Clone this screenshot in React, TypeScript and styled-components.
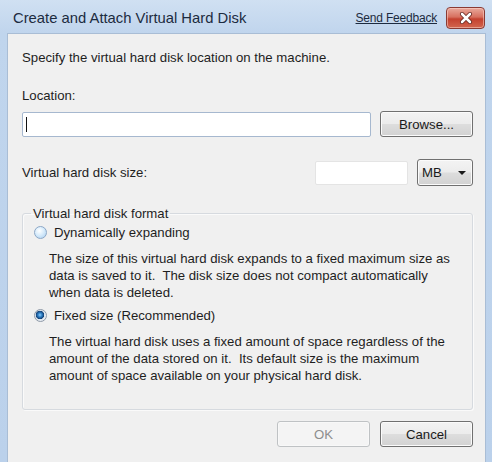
import { createGlobalStyle, styled } from 'styled-components'

const GlobalStyle = createGlobalStyle`
  html, body {
    margin: 0;
    padding: 0;
    overflow: hidden;
    background: #b9d0ea;
  }
  body {
    font-family: "Liberation Sans", Arial, sans-serif;
  }
`

const Window = styled.div`
  width: 492px;
  height: 462px;
  box-sizing: border-box;
  display: flex;
  flex-direction: column;
  padding: 0 6px 0 7px;
  background: linear-gradient(180deg, #d0e0f2 0px, #c0d5ed 33px, #bbd1eb 100%);
`

const TitleBar = styled.div`
  height: 33px;
  display: flex;
  align-items: center;
  padding: 2px 1px 0 6px;
  box-sizing: border-box;
`

const Title = styled.div`
  flex: 1;
  font-size: 14.8px;
  color: #1c2b40;
`

const FeedbackLink = styled.a`
  font-size: 12px;
  color: #1c2b40;
  text-decoration: underline;
  margin-right: 9px;
  letter-spacing: -0.2px;
`

const CloseButton = styled.div`
  width: 39px;
  height: 22px;
  box-sizing: border-box;
  border: 1px solid #8a3b34;
  border-radius: 4px;
  background: linear-gradient(180deg, #e9a99c 0%, #d7705f 45%, #c4412f 55%, #d2664f 100%);
  box-shadow: inset 0 0 0 1px rgba(255, 220, 210, 0.5);
  display: flex;
  align-items: center;
  justify-content: center;
`

const Body = styled.div`
  flex: 1;
  background: #f0f0f0;
  border: 1px solid #a9bdd5;
  border-bottom: none;
  padding: 15px 12px 0 14px;
  display: flex;
  flex-direction: column;
  font-size: 13.2px;
  color: #1e1e1e;
`

const Text = styled.div<{ $top?: number }>`
  line-height: 17px;
  margin-top: ${p => p.$top ?? 0}px;
`

const Row = styled.div<{ $top: number }>`
  display: flex;
  align-items: center;
  gap: 9px;
  margin-top: ${p => p.$top}px;
`

const TextInput = styled.div<{ $width?: number; $focus?: boolean }>`
  ${p => (p.$width ? `width: ${p.$width}px;` : 'flex: 1;')}
  height: ${p => (p.$focus ? 25 : 24)}px;
  box-sizing: border-box;
  background: #fff;
  border: 1px solid ${p => (p.$focus ? '#a6b8cf' : '#e4e4e4')};
  border-radius: 2px;
  display: flex;
  align-items: center;
  padding-left: 3px;
`

const Caret = styled.span`
  width: 1px;
  height: 15px;
  background: #111;
`

const Button = styled.div<{ $disabled?: boolean }>`
  width: 93px;
  height: 26px;
  box-sizing: border-box;
  border: 1px solid ${p => (p.$disabled ? '#bfc2c4' : '#707070')};
  border-radius: 3px;
  background: ${p =>
    p.$disabled
      ? '#f4f4f4'
      : 'linear-gradient(180deg, #f3f3f3 0%, #ececec 48%, #dddddd 52%, #d2d2d2 100%)'};
  box-shadow: inset 0 0 0 1px ${p => (p.$disabled ? '#f8f8f8' : '#fbfbfb')};
  color: ${p => (p.$disabled ? '#8d8d8d' : '#1a1a1a')};
  display: flex;
  align-items: center;
  justify-content: center;
`

const Select = styled(Button)`
  width: 56px;
  height: 27px;
  justify-content: space-between;
  padding: 0 6px 0 4px;
`

const Arrow = styled.span`
  width: 0;
  height: 0;
  border-left: 4px solid transparent;
  border-right: 4px solid transparent;
  border-top: 4px solid #1a1a1a;
`

const Label = styled.div`
  flex: 1;
  line-height: 17px;
`

const Group = styled.fieldset`
  margin: 19px 0 0 0;
  padding: 0 10px 25px 8px;
  border: 1px solid #d6dadf;
  border-radius: 3px;
  box-shadow: inset 1px 1px 0 #fafafa, 1px 1px 0 #fafafa;
`

const Legend = styled.legend`
  padding: 0 2px;
  line-height: 17px;
`

const Option = styled.div<{ $top: number }>`
  display: flex;
  align-items: center;
  gap: 7px;
  line-height: 17px;
  margin: ${p => p.$top}px 0 0 3px;
`

const Radio = styled.span<{ $checked?: boolean }>`
  width: 13px;
  height: 13px;
  box-sizing: border-box;
  border-radius: 50%;
  border: 1px solid ${p => (p.$checked ? '#8f9aa8' : '#8ca7c6')};
  background: ${p =>
    p.$checked
      ? 'radial-gradient(circle at 45% 45%, #8fd0fb 0, #2f7fc6 2px, #123f73 4px, #dfe6ee 4.5px, #f7f9fb 100%)'
      : 'radial-gradient(circle at 40% 35%, #ffffff 0, #d8ecfb 45%, #a9cdef 100%)'};
`

const Description = styled.div<{ $top: number }>`
  line-height: 17px;
  margin: ${p => p.$top}px 0 0 18px;
`

const Footer = styled.div`
  display: flex;
  justify-content: flex-end;
  gap: 10px;
  margin-top: 11px;
`

export default function App() {
  return (
    <>
      <GlobalStyle />
      <Window>
        <TitleBar>
          <Title>Create and Attach Virtual Hard Disk</Title>
          <FeedbackLink>Send Feedback</FeedbackLink>
          <CloseButton>
            <svg width="16" height="12" viewBox="0 0 16 12">
              <path d="M4 2 L12 10 M12 2 L4 10" stroke="#5a1d16" strokeWidth="4" strokeLinecap="round" />
              <path d="M4 2 L12 10 M12 2 L4 10" stroke="#ffffff" strokeWidth="2.6" strokeLinecap="round" />
            </svg>
          </CloseButton>
        </TitleBar>
        <Body>
          <Text>Specify the virtual hard disk location on the machine.</Text>
          <Text $top={21}>Location:</Text>
          <Row $top={7}>
            <TextInput $focus>
              <Caret />
            </TextInput>
            <Button>Browse...</Button>
          </Row>
          <Row $top={22}>
            <Label>Virtual hard disk size:</Label>
            <TextInput $width={93} />
            <Select>
              MB
              <Arrow />
            </Select>
          </Row>
          <Group>
            <Legend>Virtual hard disk format</Legend>
            <Option $top={2}>
              <Radio />
              Dynamically expanding
            </Option>
            <Description $top={9}>
              The size of this virtual hard disk expands to a fixed maximum size as
              <br />
              data is saved to it.{'\u00a0'} The disk size does not compact automatically
              <br />
              when data is deleted.
            </Description>
            <Option $top={6}>
              <Radio $checked />
              Fixed size (Recommended)
            </Option>
            <Description $top={9}>
              The virtual hard disk uses a fixed amount of space regardless of the
              <br />
              amount of the data stored on it.{'\u00a0'} Its default size is the maximum
              <br />
              amount of space available on your physical hard disk.
            </Description>
          </Group>
          <Footer>
            <Button $disabled>OK</Button>
            <Button>Cancel</Button>
          </Footer>
        </Body>
      </Window>
    </>
  )
}
